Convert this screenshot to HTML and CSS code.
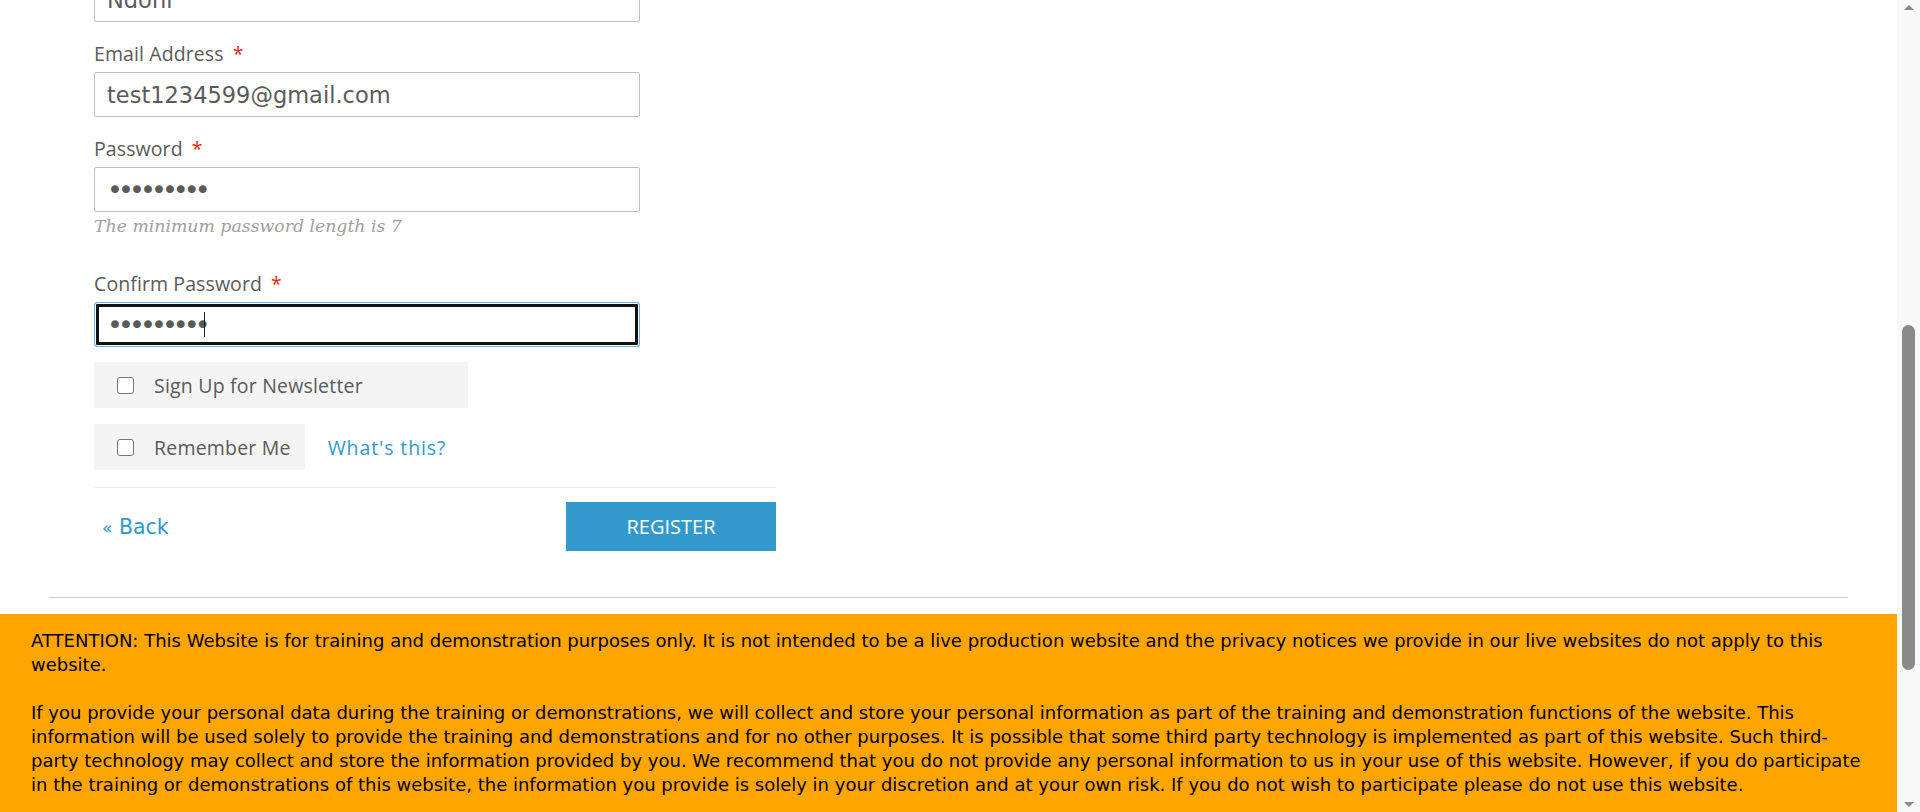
FILE: index.html
```html
<!DOCTYPE html>
<html lang="en">
<head>
<meta charset="utf-8">
<title>Create an Account</title>
<link rel="stylesheet" href="styles.css">
</head>
<body>
<div class="viewport">
  <div class="page">
    <main class="main">
      <form class="form">
        <div class="field">
          <label class="label">Last Name<span class="req">*</span></label>
          <input class="input" type="text" value="Ndoni">
        </div>
        <div class="field">
          <label class="label">Email Address<span class="req">*</span></label>
          <input class="input" type="email" value="test1234599@gmail.com">
        </div>
        <div class="field">
          <label class="label">Password<span class="req">*</span></label>
          <input class="input input--pass" type="password" value="123456789">
          <p class="hint">The minimum password length is 7</p>
        </div>
        <div class="field field--confirm">
          <label class="label">Confirm Password<span class="req">*</span></label>
          <div class="focus-wrap">
            <input class="input input--pass input--focus" type="password" value="123456789"><span class="caret"></span>
          </div>
        </div>
        <label class="check check--wide"><input type="checkbox" class="box"><span>Sign Up for Newsletter</span></label>
        <div class="check-row">
          <label class="check"><input type="checkbox" class="box"><span>Remember Me</span></label>
          <a class="link" href="#">What's this?</a>
        </div>
        <div class="actions">
          <a class="back" href="#"><span class="laquo">«</span> Back</a>
          <button class="btn" type="button">Register</button>
        </div>
      </form>
      <hr class="rule">
    </main>
    <div class="notice">
      <p>ATTENTION: This Website is for training and demonstration purposes only. It is not intended to be a live production website and the privacy notices we provide in our live websites do not apply to this website.</p>
      <p>If you provide your personal data during the training or demonstrations, we will collect and store your personal information as part of the training and demonstration functions of the website. This information will be used solely to provide the training and demonstrations and for no other purposes. It is possible that some third party technology is implemented as part of this website. Such third-party technology may collect and store the information provided by you. We recommend that you do not provide any personal information to us in your use of this website. However, if you do participate in the training or demonstrations of this website, the information you provide is solely in your discretion and at your own risk. If you do not wish to participate please do not use this website.</p>
    </div>
  </div>
  <div class="scrollbar" aria-hidden="true">
    <span class="sb-up"></span>
    <span class="sb-thumb"></span>
    <span class="sb-down"></span>
  </div>
</div>
</body>
</html>
```

FILE: styles.css
```css
* { box-sizing: border-box; }
html, body { margin: 0; padding: 0; background: #fff; }
body { font-family: "Open Sans", "Liberation Sans", sans-serif; color: #636363; }

.viewport { display: flex; height: 812px; overflow: hidden; }
.page { flex: 1; min-width: 0; display: flex; flex-direction: column; }

.main { padding: 0 49px; }
.form { width: 682px; margin: -53px 0 0 45px; }

.field + .field { margin-top: 20px; }
.field--confirm.field { margin-top: 34px; }

.label {
  display: block;
  font-size: 19.5px;
  letter-spacing: 0.1px;
  line-height: 24px;
  margin-bottom: 6px;
  color: #5a5a5a;
}
.req { color: #df280a; margin-left: 9px; }

.input {
  display: block;
  width: 546px;
  height: 45px;
  margin: 0;
  padding: 0 12px;
  border: 1px solid #c0c0c0;
  border-radius: 2px;
  background: #fff;
  font-family: "DejaVu Sans", Verdana, sans-serif;
  font-size: 22.5px;
  color: #5a5a5a;
  outline: none;
}
.input--pass { font-size: 27px; letter-spacing: -4.95px; padding-left: 12px; }
.focus-wrap { position: relative; width: 546px; }
.input--focus {
  border: 1px solid #6fb2df;
  border-radius: 3px;
  box-shadow: inset 0 0 0 1px #fff, inset 0 0 0 4px #111;
}
.caret {
  position: absolute;
  left: 110px;
  top: 10px;
  width: 1px;
  height: 25px;
  background: #222;
}

.hint {
  margin: 2px 0 0;
  font-family: "DejaVu Serif", Georgia, serif;
  font-style: italic;
  font-size: 17.3px;
  line-height: 24px;
  color: #a0a0a0;
}

.check {
  display: inline-flex;
  align-items: center;
  height: 46px;
  padding: 0 14px 0 23px;
  background: #f4f4f4;
  font-size: 19.5px;
  letter-spacing: 0.2px;
  color: #5a5a5a;
}
.check--wide { display: flex; width: 374px; margin-top: 15px; }
.box {
  appearance: none;
  -webkit-appearance: none;
  width: 17px;
  height: 17px;
  margin: 0 20px 0 0;
  border: 1.5px solid #767676;
  border-radius: 3px;
  background: #fff;
  flex: none;
}
.check-row { display: flex; align-items: center; margin-top: 16px; }
.link {
  margin-left: 23px;
  font-size: 19.5px;
  letter-spacing: 0.9px;
  color: #3399cc;
  text-decoration: none;
}

.actions {
  display: flex;
  align-items: center;
  justify-content: space-between;
  margin-top: 17px;
  padding-top: 14px;
  border-top: 1px solid #ededed;
}
.back {
  margin-left: 8px;
  font-family: "DejaVu Sans", Verdana, sans-serif;
  font-size: 20.5px;
  color: #3399cc;
  text-decoration: none;
}
.laquo { font-size: 17px; }
.btn {
  width: 210px;
  height: 49px;
  border: 0;
  background: #3399cc;
  color: #fff;
  font-family: "Open Sans", sans-serif;
  font-size: 20px;
  text-transform: uppercase;
  padding: 0;
}

.rule {
  margin: 46px 0 0;
  border: 0;
  border-top: 1px solid #cccccc;
  height: 0;
}

.notice {
  margin-top: 16px;
  background: #ffa500;
  padding: 15px 30px 20px 31px;
  font-family: "DejaVu Sans", Verdana, Tahoma, sans-serif;
  font-size: 18px;
  line-height: 24px;
  color: #000;
  flex: 1;
}
.notice p { margin: 0 0 24px; }

.scrollbar {
  flex: none;
  width: 23px;
  background: #f9f9f9;
  display: flex;
  flex-direction: column;
  align-items: center;
}
.sb-up {
  margin-top: 5px;
  width: 0; height: 0;
  border-left: 5px solid transparent;
  border-right: 5px solid transparent;
  border-bottom: 5px solid #8a8a8a;
}
.sb-thumb {
  margin-top: 315px;
  width: 13px;
  height: 345px;
  border-radius: 7px;
  background: #8a8a8a;
}
.sb-down {
  margin-top: auto;
  margin-bottom: 5px;
  width: 0; height: 0;
  border-left: 5px solid transparent;
  border-right: 5px solid transparent;
  border-top: 5px solid #8a8a8a;
}
```
